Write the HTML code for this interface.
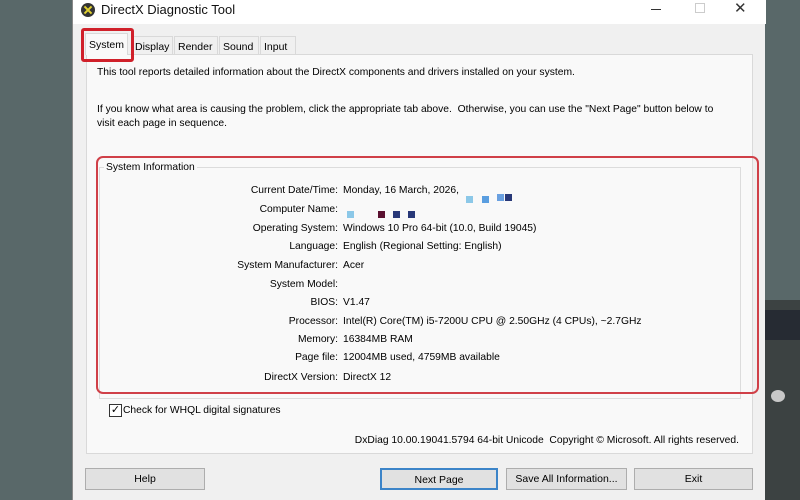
<!DOCTYPE html>
<html><head><style>
*{margin:0;padding:0;box-sizing:border-box}
body{width:800px;height:500px;overflow:hidden;background:#596869;position:relative;font-family:"Liberation Sans","DejaVu Sans",sans-serif;font-size:10.3px;color:#000}
.a{position:absolute;white-space:nowrap}
.win{left:72px;top:0;width:693px;height:500px;background:#f0f0f0;border-left:1px solid #888}
.title{left:0;top:0;width:693px;height:24px;background:#fff}
.tab{top:36px;height:18px;border:1px solid #d9d9d9;border-bottom:none;background:#f0f0f0;padding:4px 3px 0;font-size:10.5px}
.panel{left:13px;top:54px;width:667px;height:400px;background:#f9f9f9;border:1px solid #d9d9d9}
.lbl{text-align:right;width:240px;left:98px}
.val{left:343px}
.btn{top:468px;height:22px;background:#e1e1e1;border:1px solid #adadad;text-align:center;line-height:20px;font-size:10.5px}
.px{position:absolute;width:7px;height:7px}
</style></head><body>
<div class="a" style="left:765px;top:300px;width:35px;height:200px;background:#3c4242"></div>
<div class="a" style="left:765px;top:310px;width:35px;height:30px;background:#262b33"></div>
<div class="a" style="left:771px;top:390px;width:14px;height:12px;border-radius:50%;background:#c8c8c8"></div>
<div class="a win">
 <div class="a title"></div>
 <div class="a" style="left:8px;top:3px;width:14px;height:14px;border-radius:50%;background:#333"><div class="a" style="left:2px;top:6px;width:10px;height:2px;background:#e0d030;transform:rotate(45deg)"></div><div class="a" style="left:2px;top:6px;width:10px;height:2px;background:#e0d030;transform:rotate(-45deg)"></div></div>
 <div class="a" style="left:28px;top:2px;font-size:13px;color:#111">DirectX Diagnostic Tool</div>
 <div class="a" style="left:578px;top:9px;width:10px;height:1px;background:#333"></div>
 <div class="a" style="left:622px;top:3px;width:10px;height:10px;border:1px solid #ccc"></div>
 <div class="a" style="left:661px;top:-1px;font-size:15px;color:#333">✕</div>
 <div class="a panel"></div>
 <div class="a tab" style="left:12px;top:33px;height:22px;background:#f9f9f9;border-color:#d9d9d9;z-index:2;padding-top:5px">System</div>
 <div class="a tab" style="left:58px;width:42px">Display</div>
 <div class="a tab" style="left:101px;width:44px">Render</div>
 <div class="a tab" style="left:146px;width:40px">Sound</div>
 <div class="a tab" style="left:187px;width:36px">Input</div>
 <div class="a" style="left:8px;top:28px;width:53px;height:34px;border:3px solid #d0202a;border-radius:3px;z-index:3"></div>
 <div class="a" style="left:24px;top:67px">This tool reports detailed information about the DirectX components and drivers installed on your system.</div>
 <div class="a" style="left:24px;top:103px;line-height:14px">If you know what area is causing the problem, click the appropriate tab above.&nbsp; Otherwise, you can use the "Next Page" button below to<br>visit each page in sequence.</div>
 <div class="a" style="left:26px;top:167px;width:642px;height:232px;border:1px solid #dcdcdc"></div>
 <div class="a" style="left:31px;top:162px;background:#f9f9f9;padding:0 2px">System Information</div>
 <div class="a" style="left:23px;top:156px;width:663px;height:238px;border:2px solid #d04048;border-radius:7px"></div>
 <div class="a" style="left:36px;top:404px;width:13px;height:13px;border:1px solid #333;background:#fff;font-size:11px;line-height:11px;text-align:center">✓</div>
 <div class="a" style="left:50px;top:405px">Check for WHQL digital signatures</div>
 <div class="a" style="left:215px;top:435px;width:451px;text-align:right">DxDiag 10.00.19041.5794 64-bit Unicode&nbsp; Copyright © Microsoft. All rights reserved.</div>
 <div class="a btn" style="left:12px;width:120px">Help</div>
 <div class="a btn" style="left:307px;width:118px;border:2px solid #3c84c8">Next Page</div>
 <div class="a btn" style="left:433px;width:121px">Save All Information...</div>
 <div class="a btn" style="left:561px;width:119px">Exit</div>
</div>
<div class="a lbl" style="top:185px">Current Date/Time:</div><div class="a val" style="top:185px">Monday, 16 March, 2026,</div>
<div class="px" style="left:466px;top:196px;background:#8cc8e8"></div><div class="px" style="left:482px;top:196px;background:#5a9ee0"></div><div class="px" style="left:497px;top:194px;background:#6aa0e0"></div><div class="px" style="left:505px;top:194px;background:#283878"></div>
<div class="a lbl" style="top:204px">Computer Name:</div>
<div class="px" style="left:347px;top:211px;background:#8cc8e8"></div><div class="px" style="left:378px;top:211px;background:#5a1030"></div><div class="px" style="left:393px;top:211px;background:#283878"></div><div class="px" style="left:408px;top:211px;background:#283878"></div>
<div class="a lbl" style="top:223px">Operating System:</div><div class="a val" style="top:223px">Windows 10 Pro 64-bit (10.0, Build 19045)</div>
<div class="a lbl" style="top:241px">Language:</div><div class="a val" style="top:241px">English (Regional Setting: English)</div>
<div class="a lbl" style="top:260px">System Manufacturer:</div><div class="a val" style="top:260px">Acer</div>
<div class="a lbl" style="top:279px">System Model:</div>
<div class="a lbl" style="top:297px">BIOS:</div><div class="a val" style="top:297px">V1.47</div>
<div class="a lbl" style="top:316px">Processor:</div><div class="a val" style="top:316px">Intel(R) Core(TM) i5-7200U CPU @ 2.50GHz (4 CPUs), ~2.7GHz</div>
<div class="a lbl" style="top:334px">Memory:</div><div class="a val" style="top:334px">16384MB RAM</div>
<div class="a lbl" style="top:352px">Page file:</div><div class="a val" style="top:352px">12004MB used, 4759MB available</div>
<div class="a lbl" style="top:372px">DirectX Version:</div><div class="a val" style="top:372px">DirectX 12</div>
</body></html>
